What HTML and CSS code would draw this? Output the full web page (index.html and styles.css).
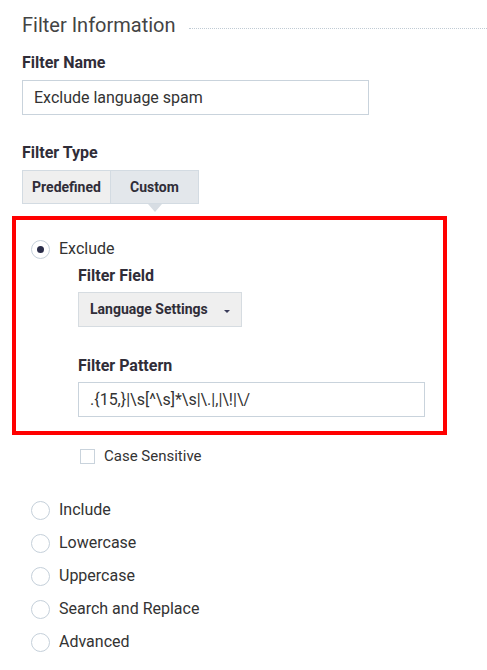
FILE: index.html
```html
<!DOCTYPE html>
<html>
<head>
<meta charset="utf-8">
<link rel="stylesheet" href="styles.css">
</head>
<body>
<div class="page">
  <div class="title-row">
    <span class="title">Filter Information</span>
    <span class="title-rule"></span>
  </div>

  <div class="label label-name">Filter Name</div>
  <div class="textbox name-box">Exclude language spam</div>

  <div class="label label-type">Filter Type</div>
  <div class="seg">
    <div class="seg-btn">Predefined</div>
    <div class="seg-btn seg-active">Custom</div>
  </div>

  <div class="highlight">
    <div class="radio-row">
      <span class="radio radio-on"></span>
      <span class="radio-text">Exclude</span>
    </div>
    <div class="sub">
      <div class="label label-field">Filter Field</div>
      <div class="dropdown">
        <span>Language Settings</span>
        <span class="caret"></span>
      </div>
      <div class="label label-pattern">Filter Pattern</div>
      <div class="textbox pattern-box">.{15,}|\s[^\s]*\s|\.|,|\!|\/</div>
    </div>
  </div>

  <div class="check-row">
    <span class="checkbox"></span>
    <span class="check-text">Case Sensitive</span>
  </div>

  <div class="radio-list">
    <div class="radio-row"><span class="radio"></span><span class="radio-text">Include</span></div>
    <div class="radio-row"><span class="radio"></span><span class="radio-text">Lowercase</span></div>
    <div class="radio-row"><span class="radio"></span><span class="radio-text">Uppercase</span></div>
    <div class="radio-row"><span class="radio"></span><span class="radio-text">Search and Replace</span></div>
    <div class="radio-row"><span class="radio"></span><span class="radio-text">Advanced</span></div>
  </div>
</div>
</body>
</html>
```

FILE: styles.css
```css
html, body {
  margin: 0;
  padding: 0;
  background: #fff;
}
body {
  font-family: Roboto, "Liberation Sans", sans-serif;
  color: #333;
  width: 487px;
  height: 670px;
  overflow: hidden;
}
.page {
  padding-left: 22px;
}
.title-row {
  margin-top: 13px;
  height: 24px;
  display: flex;
  align-items: center;
  gap: 13px;
}
.title {
  font-size: 20px;
  line-height: 24px;
  color: #444;
  font-weight: 400;
}
.title-rule {
  flex: 1;
  border-top: 1px dotted #c0cbd4;
  margin-top: 7px;
}
.label {
  font-size: 16px;
  line-height: 20px;
  font-weight: 700;
  color: #302d38;
}
.label-name { margin-top: 16px; }
.label-type { margin-top: 28px; }
.textbox {
  box-sizing: border-box;
  height: 35px;
  border: 1px solid #c9d3dc;
  padding: 0 11px;
  font-size: 16px;
  line-height: 33px;
  color: #333;
  white-space: nowrap;
}
.name-box {
  width: 347px;
  margin-top: 7px;
}
.seg {
  margin-top: 7px;
  display: flex;
  width: 177px;
  height: 34px;
  box-sizing: border-box;
  border: 1px solid #d3dbe2;
  position: relative;
}
.seg-btn {
  font-size: 14px;
  font-weight: 700;
  line-height: 32px;
  text-align: center;
  background: #efefef;
  color: #302d38;
}
.seg-btn:first-child {
  width: 87px;
  border-right: 1px solid #d3dbe2;
}
.seg-active {
  flex: 1;
  background: #e3e7eb;
  position: relative;
}
.seg-active::after {
  content: "";
  position: absolute;
  left: 50%;
  bottom: -9px;
  margin-left: -7px;
  width: 0;
  height: 0;
  border-left: 7px solid transparent;
  border-right: 7px solid transparent;
  border-top: 8px solid #d7dde3;
}
.highlight {
  margin-top: 12px;
  margin-left: -10px;
  width: 435px;
  box-sizing: border-box;
  border: 4px solid #f00;
  padding: 19px 0 14px 15px;
}
.radio-row {
  display: flex;
  align-items: center;
  height: 20px;
}
.radio {
  box-sizing: border-box;
  width: 19px;
  height: 19px;
  border-radius: 50%;
  border: 1px solid #c5d0da;
  background: #fff;
  display: flex;
  align-items: center;
  justify-content: center;
  flex: none;
}
.radio-on::after {
  content: "";
  width: 7px;
  height: 7px;
  border-radius: 50%;
  background: #2b2d4a;
}
.radio-text {
  margin-left: 9px;
  font-size: 16px;
  line-height: 20px;
  color: #333;
}
.sub {
  margin-left: 47px;
}
.label-field { margin-top: 7px; }
.dropdown {
  margin-top: 6px;
  box-sizing: border-box;
  width: 164px;
  height: 35px;
  border: 1px solid #d6dce1;
  background: #efefef;
  padding: 0 11px 0 11px;
  display: flex;
  align-items: center;
  justify-content: space-between;
  font-size: 14px;
  font-weight: 700;
  line-height: 33px;
  color: #302d38;
}
.caret {
  width: 0;
  height: 0;
  border-left: 3.5px solid transparent;
  border-right: 3.5px solid transparent;
  border-top: 3.5px solid #3a3c5a;
  margin-top: 3px;
}
.label-pattern { margin-top: 29px; }
.pattern-box {
  margin-top: 6px;
  width: 347px;
}
.check-row {
  margin-top: 11px;
  margin-left: 58px;
  display: flex;
  align-items: center;
  height: 20px;
}
.checkbox {
  box-sizing: border-box;
  width: 15px;
  height: 15px;
  border: 1px solid #c9d3dc;
  background: #fff;
}
.check-text {
  margin-left: 9px;
  font-size: 15px;
  line-height: 20px;
}
.radio-list {
  margin-top: 34px;
  margin-left: 9px;
  display: flex;
  flex-direction: column;
  gap: 13px;
}
```
